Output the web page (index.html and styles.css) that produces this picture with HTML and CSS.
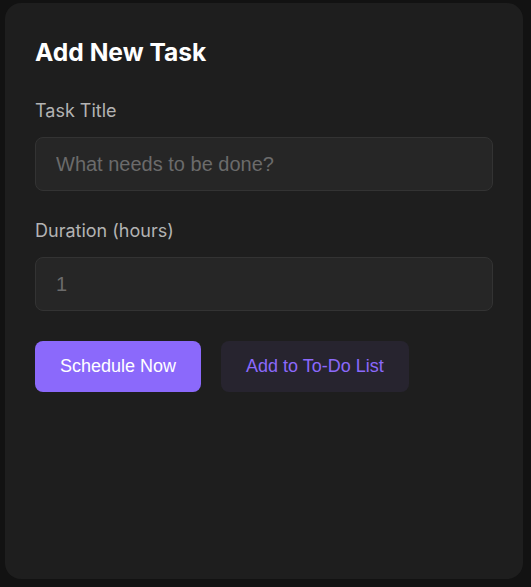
FILE: index.html
```html
<!DOCTYPE html>
<html lang="en">
<head>
<meta charset="utf-8">
<title>Add New Task</title>
<link rel="stylesheet" href="styles.css">
</head>
<body>
<div class="card">
  <h2 class="card-title">Add New Task</h2>
  <div class="field">
    <label class="field-label" for="title">Task Title</label>
    <input class="field-input" id="title" type="text" placeholder="What needs to be done?">
  </div>
  <div class="field">
    <label class="field-label" for="duration">Duration (hours)</label>
    <input class="field-input" id="duration" type="text" placeholder="1">
  </div>
  <div class="actions">
    <button class="btn btn-primary">Schedule Now</button>
    <button class="btn btn-secondary">Add to To-Do List</button>
  </div>
</div>
</body>
</html>
```

FILE: styles.css
```css
* { box-sizing: border-box; }
html, body { height: 100%; }
body {
  margin: 0;
  padding: 3px 8px 8px 5px;
  background: #121212;
  font-family: Inter, "Noto Sans", sans-serif;
  color: #e0e0e0;
}
.card {
  height: 100%;
  background: #1e1e1e;
  border-radius: 16px;
  padding: 34px 30px 30px;
  display: flex;
  flex-direction: column;
  gap: 29px;
}
.card-title {
  margin: 0 0 4px;
  font-size: 24.6px;
  font-weight: 700;
  line-height: 30px;
  color: #ffffff;
}
.field {
  display: flex;
  flex-direction: column;
}
.field-label {
  font-size: 18px;
  line-height: 22px;
  color: #b3b3b3;
  margin-bottom: 15px;
}
.field-input {
  height: 54px;
  padding: 0 20px;
  background: #262626;
  border: 1px solid #333333;
  border-radius: 8px;
  font-family: "Liberation Sans", Arial, sans-serif;
  font-size: 20px;
  color: #e0e0e0;
  outline: none;
}
.field-input::placeholder { color: #6b6b6b; }
.actions {
  display: flex;
  gap: 20px;
  margin-top: 1px;
}
.btn {
  height: 51px;
  padding: 0 25px;
  border: none;
  border-radius: 8px;
  font-family: "Liberation Sans", Arial, sans-serif;
  font-size: 18px;
}
.btn-primary {
  background: #8b69fb;
  color: #ffffff;
}
.btn-secondary {
  background: #27242f;
  color: #8b69fb;
}
```
